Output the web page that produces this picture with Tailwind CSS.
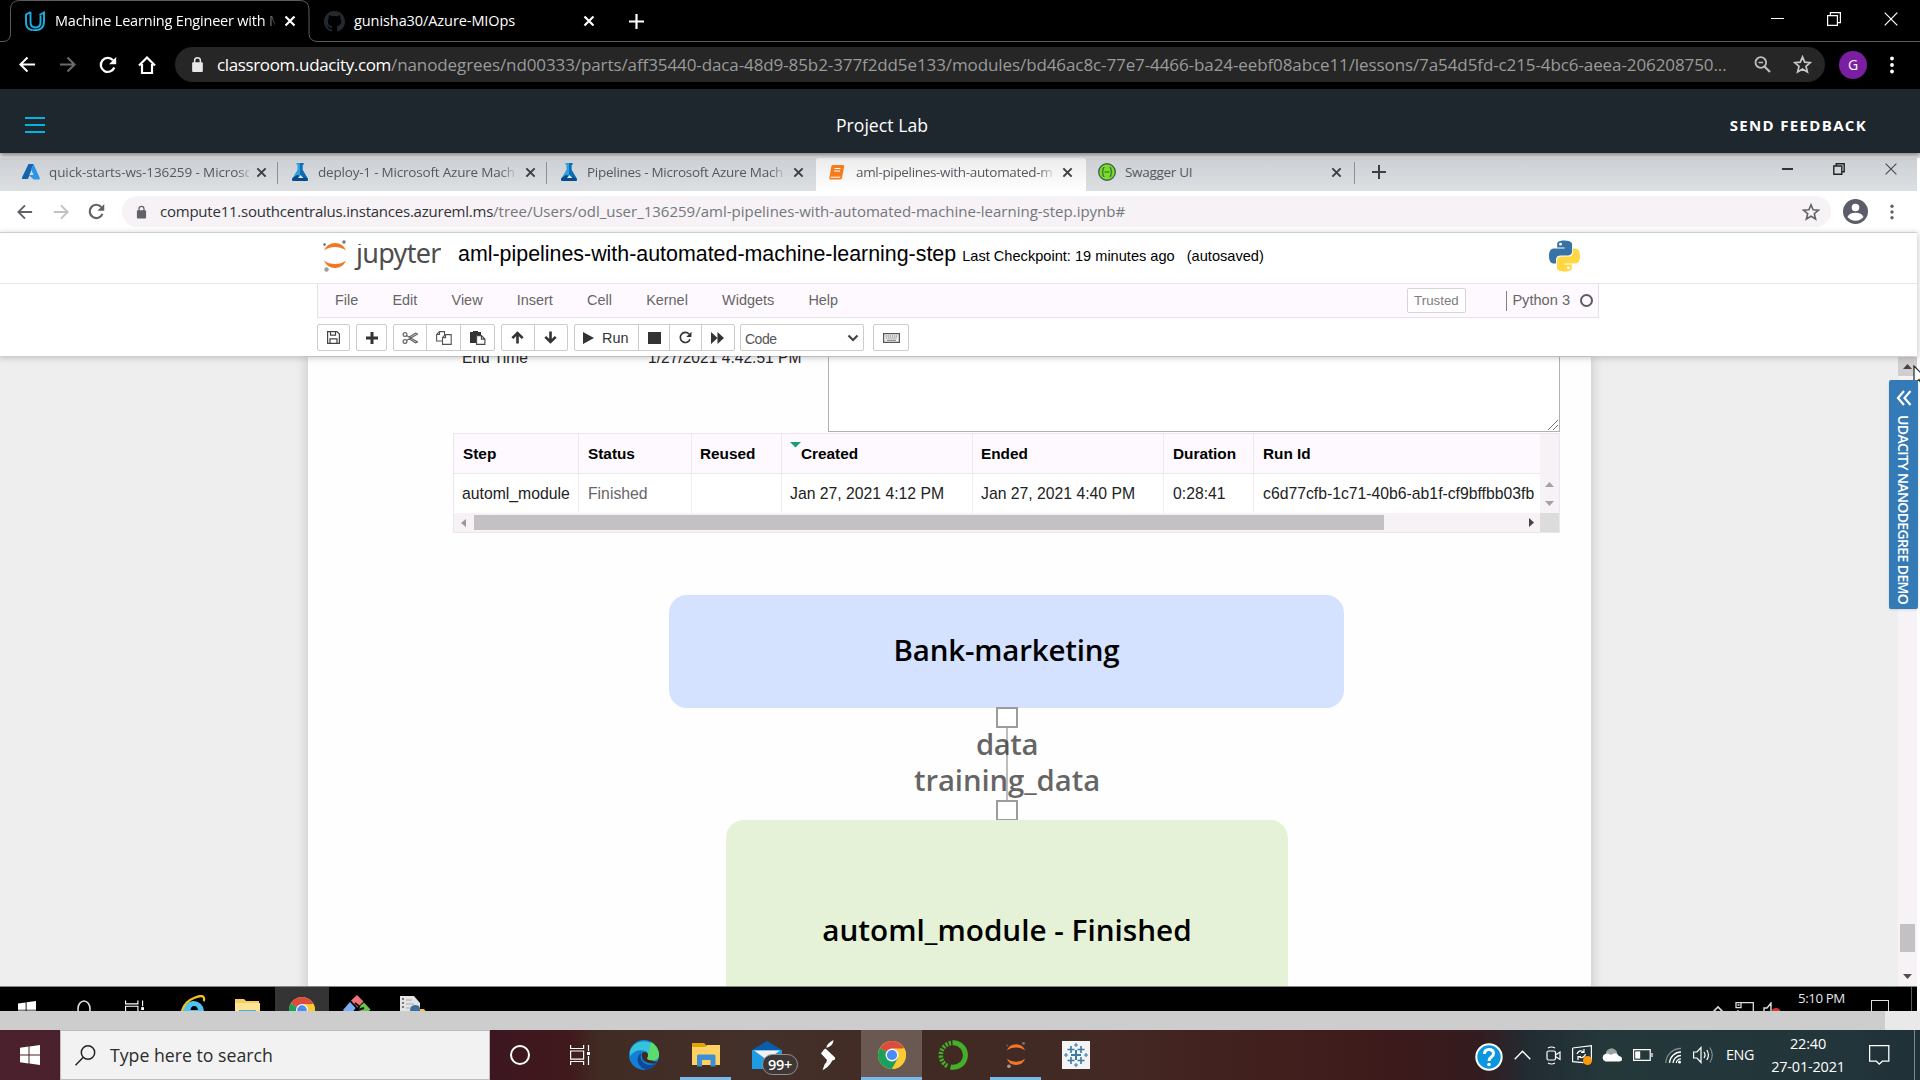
<!DOCTYPE html>
<html lang="en">
<head>
<meta charset="utf-8">
<title>Machine Learning Engineer with Microsoft Azure</title>
<script src="https://cdn.jsdelivr.net/npm/@tailwindcss/browser@4"></script>
</head>
<body class="w-[1920px] h-[1080px] overflow-hidden bg-white font-['Open_Sans',sans-serif]">
<svg class="hidden">
  <symbol id="x" viewBox="0 0 12 12"><path d="M1.5 1.5l9 9M10.500 1.500l-9 9" stroke="currentColor" stroke-width="2.200" fill="none"/></symbol>
  <symbol id="back" viewBox="0 0 18 18"><path d="M17 9H2M9 1.500L1.500 9 9 16.500" stroke="currentColor" stroke-width="2.200" fill="none"/></symbol>
  <symbol id="fwd" viewBox="0 0 18 18"><path d="M1 9h15M9 1.500L16.500 9 9 16.500" stroke="currentColor" stroke-width="2.200" fill="none"/></symbol>
  <symbol id="reload" viewBox="0 0 18 18"><path d="M15.300 11.500A7 7 0 1 1 14 4.200" stroke="currentColor" stroke-width="2.300" fill="none"/><path d="M17.200 1v7.200H10z" fill="currentColor"/></symbol>
  <symbol id="lock" viewBox="0 0 12 14"><rect x="1" y="5" width="10" height="9" rx="1" fill="currentColor"/><path d="M3.300 6V3.500a2.700 2.700 0 0 1 5.400 0V6" stroke="currentColor" stroke-width="1.400" fill="none"/></symbol>
  <symbol id="star" viewBox="0 0 18 18"><path d="M9 1.800l2.100 5 5.300.4-4.100 3.500 1.300 5.300L9 13.200 4.400 16l1.300-5.300L1.600 7.200l5.300-.4z" stroke="currentColor" stroke-width="1.600" fill="none"/></symbol>
  <symbol id="dots" viewBox="0 0 4 18"><circle cx="2" cy="2.500" r="1.900" fill="currentColor"/><circle cx="2" cy="9" r="1.900" fill="currentColor"/><circle cx="2" cy="15.500" r="1.900" fill="currentColor"/></symbol>
  <symbol id="flask" viewBox="0 0 18 18"><path d="M5.500 0h7v1.800h-1v5L17 16q.6 2-1.500 2h-13Q.4 18 1 16l5.500-9.200v-5h-1z" fill="#2f9fdd"/><path d="M9 0h3.500v1.800h-1v5L17 16q.6 2-1.500 2H9z" fill="#0f6db5"/><path d="M1.500 15L6 12l5 1 5.500 2.500Q17 18 15.500 18h-13Q.4 18 1.500 15z" fill="#0b4a8a"/><path d="M7 15l2.500-3 3 3z" fill="#dceefa"/></symbol>
  <symbol id="chrome" viewBox="0 0 28 28"><circle cx="14" cy="14" r="14" fill="#fbc934"/><path d="M14 14L1.900 7A14 14 0 0 1 26.100 7z" fill="#dd4b3e"/><path d="M14 14L1.900 7A14 14 0 0 0 14 28l6-10.500z" fill="#1c9f5b"/><path d="M14 7.500h12.400A14 14 0 0 1 14 28l5.800-10.500z" fill="#fbc934"/><circle cx="14" cy="14" r="6.500" fill="#f5f5f5"/><circle cx="14" cy="14" r="5.100" fill="#4b8bf5"/></symbol>
  <symbol id="jup" viewBox="0 0 24 32"><path d="M1 10.500Q4 3 12 3t11 7.500Q18.500 7 12 7T1 10.500zM1 20.500Q4 28 12 28t11-7.500Q18.500 24 12 24T1 20.500z" fill="#f37626"/><circle cx="21" cy="2" r="1.700" fill="#767677"/><circle cx="1.500" cy="4.500" r="1.200" fill="#616262"/><circle cx="3.500" cy="29.500" r="2.200" fill="#9e9e9e"/></symbol>
  <symbol id="win" viewBox="0 0 20 20"><path d="M0 2.800l8.500-1.200v8H0zM9.500 1.400L20 0v9.600H9.500zM0 10.500h8.500v8L0 17.300zM9.500 10.500H20V20L9.500 18.600z" fill="#fff"/></symbol>
  <symbol id="view" viewBox="0 0 20 20"><path d="M.6 0v3.500h13V0M.6 20v-3.500h13V20M.6 6h13v8.200H.6zM18.500 0v6M18.500 11v9" stroke="#fff" stroke-width="1.200" fill="none"/><path d="M17 7h3v3h-3z" fill="#fff"/></symbol>
  <symbol id="restore" viewBox="0 0 14 14"><path d="M.6 3.600h9.800v9.800H.6zM3.400 3.600V.6h10v10h-3" stroke="currentColor" stroke-width="1.200" fill="none"/></symbol>
  <symbol id="close" viewBox="0 0 14 14"><path d="M.7.7l12.600 12.600M13.300.7L.7 13.300" stroke="currentColor" stroke-width="1.200" fill="none"/></symbol>
</svg>

<!-- Browser tabs -->
<div class="relative h-[42px] bg-black text-white flex items-center text-[14.500px]">
  <svg class="absolute left-0 top-0 w-[1920px] h-[42px]" fill="none" stroke="#5c5c5c"><path d="M0 41.500h3q7.500 0 7.500-8V9.500q0-9 9-9H300q9 0 9 9v24q0 8 9 8h1602"/></svg>
  <svg class="w-5 h-5 ml-[25px] shrink-0" viewBox="0 0 20 20" fill="none" stroke="#15b1e7" stroke-width="1.900"><path d="M5.500 1L1 3.500V12q0 6 6.500 7.200M5.500 1v10q0 5.500 5 5.500t5-5.500V4.500"/><path d="M7.500 19.200Q19 20 19 10.500V1.500L14.500 4"/></svg>
  <div class="w-[220px] ml-[10px] overflow-hidden whitespace-nowrap tracking-[-0.200px] mask-r-from-[208px] mask-r-to-[222px]">Machine Learning Engineer with M</div>
  <svg class="w-3 h-3 ml-[9px] shrink-0"><use href="#x"/></svg>
  <svg class="w-[21px] h-[21px] ml-[28px] shrink-0" viewBox="0 0 16 16"><path fill="#24292e" d="M8 0C3.580 0 0 3.580 0 8c0 3.540 2.290 6.530 5.470 7.590.4.070.55-.17.55-.38 0-.19-.01-.82-.01-1.490-2.010.37-2.530-.49-2.690-.94-.09-.23-.48-.94-.82-1.130-.28-.15-.68-.52-.01-.53.63-.01 1.080.58 1.230.82.72 1.210 1.870.87 2.330.66.070-.52.280-.87.510-1.070-1.780-.2-3.640-.89-3.640-3.950 0-.87.31-1.590.82-2.150-.08-.2-.36-1.020.08-2.120 0 0 .67-.21 2.200.82.64-.18 1.320-.27 2-.27s1.360.09 2 .27c1.530-1.040 2.200-.82 2.200-.82.44 1.100.16 1.920.08 2.120.51.56.82 1.270.82 2.150 0 3.070-1.870 3.750-3.650 3.950.29.25.54.73.54 1.480 0 1.070-.01 1.930-.01 2.200 0 .21.15.46.55.38A8.010 8.010 0 0 0 16 8c0-4.420-3.580-8-8-8z"/></svg>
  <div class="w-[219px] ml-[9px] tracking-[-0.080px]">gunisha30/Azure-MIOps</div>
  <svg class="w-3 h-3 ml-[10px] shrink-0"><use href="#x"/></svg>
  <svg class="w-[15px] h-[15px] ml-[34px] shrink-0" viewBox="0 0 15 15"><path d="M7.500 0v15M0 7.500h15" stroke="#fff" stroke-width="2.200"/></svg>
  <div class="ml-auto mr-[22px] mb-[5px] flex items-center">
    <div class="w-[13px] h-px bg-white"></div>
    <svg class="w-[14px] h-[14px] ml-[43px]"><use href="#restore"/></svg>
    <svg class="w-[14px] h-[14px] ml-[43px]"><use href="#close"/></svg>
  </div>
</div>

<!-- Address bar -->
<div class="h-[47px] bg-black text-white flex items-center pb-[2px]">
  <svg class="w-[17px] h-[17px] ml-[19px]"><use href="#back"/></svg>
  <svg class="w-[17px] h-[17px] ml-[23px] text-[#6b6b6b]"><use href="#fwd"/></svg>
  <svg class="w-[18px] h-[18px] ml-[23px]"><use href="#reload"/></svg>
  <svg class="w-[18px] h-[18px] ml-[21px]" viewBox="0 0 18 18"><path d="M1 9.500L9 1.500l8 8M4 8v9h10V8" stroke="#fff" stroke-width="2.200" fill="none"/></svg>
  <div class="w-[1650px] h-[35px] ml-[19px] rounded-full bg-[#262626] flex items-center pl-[16px] text-[17px] whitespace-nowrap">
    <svg class="w-[13px] h-[15px] text-[#e8e8e8] shrink-0"><use href="#lock"/></svg>
    <span class="ml-[13px] tracking-[-0.360px]">classroom.udacity.com</span><span class="text-[#9a9a9a] tracking-[-0.097px]">/nanodegrees/nd00333/parts/aff35440-daca-48d9-85b2-377f2dd5e133/modules/bd46ac8c-77e7-4466-ba24-eebf08abce11/lessons/7a54d5fd-c215-4bc6-aeea-206208750...</span>
    <svg class="w-[17px] h-[17px] ml-auto shrink-0" viewBox="0 0 17 17" fill="none" stroke="#bdbdbd"><circle cx="6.800" cy="6.500" r="5.300" stroke-width="1.800"/><path d="M10.500 10.500l5.500 5.500" stroke-width="2.200"/><path d="M4.500 6.500h4.600" stroke-width="1.500"/></svg>
    <svg class="w-[19px] h-[19px] ml-[22px] mr-[13px] text-[#c8c8c8] shrink-0"><use href="#star"/></svg>
  </div>
  <div class="w-[28px] h-[28px] ml-[14px] rounded-full bg-[#7a1fa2] grid place-items-center text-[14px] leading-none">G</div>
  <svg class="w-1 h-[18px] ml-[23px]"><use href="#dots"/></svg>
</div>

<!-- Course header -->
<div class="relative z-10 h-[64px] bg-[#1e262e] text-white flex items-center pt-[8px] shadow-[0_2px_5px_rgba(0,0,0,0.45)]">
  <div class="w-5 ml-[25px] flex flex-col gap-[5px] -mt-[1px]"><div class="h-[2px] bg-[#02b3e4]"></div><div class="h-[2px] bg-[#02b3e4]"></div><div class="h-[2px] bg-[#02b3e4]"></div></div>
  <div class="w-[200px] ml-[737px] text-center text-[17.600px] tracking-[0.050px]">Project Lab</div>
  <div class="ml-auto mr-[53px] text-[15px] font-bold tracking-[1.330px]">SEND FEEDBACK</div>
</div>
<div class="h-[5px] bg-[#e3e3e3]"></div>

<div class="relative w-[1917px]">
  <!-- Lab browser tabs -->
  <div class="h-[33px] bg-linear-to-b from-[#cdd1d5] to-[#dbdfe2] flex text-[13.500px] text-[#55595e] pl-[9px]">
    <div class="w-[269px] shrink-0 flex items-center pl-[13px] pb-[5px] relative">
      <svg class="w-[18px] h-[16px] shrink-0" viewBox="0 0 18 16"><path d="M6.500 0h5L6 15H1q-1.500 0-1-1.500z" fill="#1463ac"/><path d="M11.500 0L17.800 14q.2 1.600-1 1.600h-5L6.500 11h5L9 5z" fill="#2b96e3"/></svg>
      <div class="w-[200px] ml-[9px] overflow-hidden whitespace-nowrap tracking-[-0.100px] mask-r-from-[188px] mask-r-to-[204px]">quick-starts-ws-136259 - Microsc</div>
      <svg class="w-[11px] h-[11px] ml-[7px] text-[#3c4043] shrink-0"><use href="#x"/></svg>
      <div class="absolute right-0 top-[4px] w-px h-[22px] bg-[#8d9195]"></div>
    </div>
    <div class="w-[269px] shrink-0 flex items-center pl-[13px] pb-[5px] relative">
      <svg class="w-[18px] h-[18px] shrink-0"><use href="#flask"/></svg>
      <div class="w-[200px] ml-[9px] overflow-hidden whitespace-nowrap tracking-[-0.200px] mask-r-from-[182px]">deploy-1 - Microsoft Azure Mach</div>
      <svg class="w-[11px] h-[11px] ml-[7px] text-[#3c4043] shrink-0"><use href="#x"/></svg>
      <div class="absolute right-0 top-[4px] w-px h-[22px] bg-[#8d9195]"></div>
    </div>
    <div class="w-[269px] shrink-0 flex items-center pl-[13px] pb-[5px]">
      <svg class="w-[18px] h-[18px] shrink-0"><use href="#flask"/></svg>
      <div class="w-[200px] ml-[9px] overflow-hidden whitespace-nowrap tracking-[-0.280px] mask-r-from-[182px]">Pipelines - Microsoft Azure Mach</div>
      <svg class="w-[11px] h-[11px] ml-[6px] text-[#3c4043] shrink-0"><use href="#x"/></svg>
    </div>
    <div class="w-[270px] shrink-0 flex items-center pl-[13px] pb-[5px] bg-linear-to-b from-[#ececec] to-white rounded-t-[2px]">
      <svg class="w-[16px] h-[15px] shrink-0" viewBox="0 0 16 15"><path d="M4 0h10q1.500 0 1.200 1.500L13 13q-.3 1.500-2 1.500H1.500Q0 14.500.3 13L2.300 1.500Q2.500 0 4 0z" fill="#f57c1b"/><path d="M5.500 3.500h6M5 6h6" stroke="#fff" stroke-width="1.200"/><path d="M1.500 12.200h9.800" stroke="#fff" stroke-width="1"/></svg>
      <div class="w-[200px] ml-[11px] overflow-hidden whitespace-nowrap tracking-[-0.330px] mask-r-from-[182px]">aml-pipelines-with-automated-m</div>
      <svg class="w-[11px] h-[11px] ml-[6px] text-[#3c4043] shrink-0"><use href="#x"/></svg>
    </div>
    <div class="w-[269px] shrink-0 flex items-center pl-[12px] pb-[5px] relative">
      <svg class="w-[18px] h-[18px] shrink-0" viewBox="0 0 18 18"><circle cx="9" cy="9" r="8.300" fill="#7bdc2c" stroke="#41684b" stroke-width="1.400"/><path d="M6.500 4.500Q5 4.500 5 6v1.500Q5 9 3.700 9 5 9 5 10.500V12q0 1.500 1.500 1.500M11.500 4.500Q13 4.500 13 6v1.500Q13 9 14.300 9 13 9 13 10.500V12q0 1.500-1.500 1.500M6.500 9h5" stroke="#2b5a35" stroke-width="1.100" fill="none"/></svg>
      <div class="w-[198px] ml-[9px] tracking-[-0.300px]">Swagger UI</div>
      <svg class="w-[11px] h-[11px] ml-[8px] text-[#3c4043] shrink-0"><use href="#x"/></svg>
      <div class="absolute right-0 top-[4px] w-px h-[22px] bg-[#8d9195]"></div>
    </div>
    <svg class="w-[14px] h-[14px] ml-[17px] mt-[7px]" viewBox="0 0 14 14"><path d="M7 0v14M0 7h14" stroke="#3c4043" stroke-width="2"/></svg>
    <div class="ml-auto mr-[20px] pb-[11px] flex items-center text-[#222]">
      <div class="w-[11px] h-[1.500px] bg-[#333]"></div>
      <svg class="w-[12px] h-[12px] ml-[40px]" viewBox="0 0 12 12"><path d="M.8 3h8v8.200h-8zM3.200 3V.8h8v8H8.800" stroke="#222" stroke-width="1.400" fill="none"/></svg>
      <svg class="w-[12px] h-[12px] ml-[40px] text-[#444]"><use href="#close"/></svg>
    </div>
  </div>

  <!-- Lab address bar -->
  <div class="h-[42px] bg-white border-b border-[#dfdfe6] flex items-center text-[#5f6368]">
    <svg class="w-[16px] h-[16px] ml-[17px]"><use href="#back"/></svg>
    <svg class="w-[16px] h-[16px] ml-[20px] text-[#bfc1c4]"><use href="#fwd"/></svg>
    <svg class="w-[17px] h-[17px] ml-[19px]"><use href="#reload"/></svg>
    <div class="w-[1709px] h-[31px] ml-[17px] rounded-full bg-[#f6f2f6] flex items-center pl-[14px] text-[15px] whitespace-nowrap">
      <svg class="w-[11px] h-[14px] shrink-0"><use href="#lock"/></svg>
      <span class="ml-[13px] text-[#303236] tracking-[-0.230px]">compute11.southcentralus.instances.azureml.ms</span><span class="text-[#74777b]">/tree/Users/odl_user_136259/aml-pipelines-with-automated-machine-learning-step.ipynb#</span>
      <svg class="w-[18px] h-[18px] ml-auto mr-[11px] shrink-0"><use href="#star"/></svg>
    </div>
    <svg class="w-[25px] h-[25px] ml-[12px]" viewBox="0 0 25 25"><circle cx="12.500" cy="12.500" r="12.500" fill="#5a5e68"/><circle cx="12.500" cy="8.500" r="3.800" fill="#fff"/><path d="M4.500 18q2-4.200 8-4.200t8 4.200q-3 3.700-8 3.700T4.500 18z" fill="#fff"/></svg>
    <svg class="w-[4px] h-[16px] ml-[22px]"><use href="#dots"/></svg>
  </div>

  <!-- Notebook header -->
  <div class="relative z-10 bg-white h-[123px] shadow-[0_1px_6px_1px_rgba(80,70,80,0.28)]">
    <div class="h-[50px] flex items-center pl-[323px]">
      <svg class="w-[24px] h-[32px] -mt-[5px]"><use href="#jup"/></svg>
      <div class="ml-[7px] h-[30px] mt-[1px] overflow-hidden flex items-start"><div class="-mt-[9px] text-[27px] leading-[36px] tracking-[-0.700px] text-[#4e4e4e] font-['Noto_Sans',sans-serif] w-[87px] pl-[2px]">jupyter</div></div>
      <div class="ml-[17px] -mt-[8px] flex items-baseline font-['Liberation_Sans',sans-serif] text-black whitespace-nowrap">
        <span class="text-[21.400px]">aml-pipelines-with-automated-machine-learning-step</span>
        <span class="ml-[6px] text-[14.600px]">Last Checkpoint: 19 minutes ago</span>
        <span class="ml-[12px] text-[14.600px]">(autosaved)</span>
      </div>
      <svg class="w-[31px] h-[32px] ml-auto mr-[337px] -mt-[5px]" viewBox="0 0 110 110"><path fill="#3873a5" d="M54.900 0C27 0 29 12 29 12v12.500h26.500v3.700H18S0 26 0 54.500 15.500 82 15.500 82H25V69s-.5-15.500 15.500-15.500H67s15-.2 15-14.500V15S84.500 0 54.900 0z"/><circle cx="41" cy="13" r="5" fill="#fff"/><path fill="#ffd743" d="M55.100 110c28 0 26-12 26-12V85.500H54.500v-3.700H92s18 2.200 18-26.300S94.500 28 94.500 28H85v13s.5 15.500-15.500 15.500H43s-15 .2-15 14.500v24s-2.500 15 27.100 15z"/><circle cx="69" cy="97" r="5" fill="#fff"/></svg>
    </div>
    <div class="border-t border-[#e8e8e8] px-[317px]">
      <div class="w-[1282px] h-[34px] bg-[#fdf9fe] border border-t-0 border-[#e4e2e5] flex items-center pl-[17px] gap-[34.200px] font-['Liberation_Sans',sans-serif] text-[14.450px] text-[#666]">
        <span>File</span><span>Edit</span><span>View</span><span>Insert</span><span>Cell</span><span>Kernel</span><span>Widgets</span><span>Help</span>
        <div class="ml-auto flex items-center">
          <div class="w-[59px] h-[25px] border border-[#d6d4d7] bg-white rounded-[2px] grid place-items-center text-[13.300px] text-[#7d7d7d]">Trusted</div>
          <div class="w-[1.500px] h-[20px] ml-[40px] bg-[#808080]"></div>
          <span class="ml-[5px] text-[14.600px]">Python 3</span>
          <div class="w-[13px] h-[13px] rounded-full border-2 border-[#5c5c5c] ml-[10px] mr-[5px]"></div>
        </div>
      </div>
    </div>
    <div class="flex pt-[6px] pl-[317px] h-[34px] font-['Liberation_Sans',sans-serif] text-[14.400px] text-[#333]">
      <div class="w-[33px] h-[27px] border border-[#ccc] rounded-[2px] grid place-items-center"><svg class="w-[13px] h-[13px]" viewBox="0 0 13 13" fill="none" stroke="#444" stroke-width="1.200"><path d="M.6.6h9.400L12.400 3v9.400H.6zM3.500.6v3.600h5V.6M3 12.400V7.800h7v4.600"/></svg></div>
      <div class="w-[31px] h-[27px] ml-[6px] border border-[#ccc] rounded-[2px] grid place-items-center"><svg class="w-[12px] h-[12px]" viewBox="0 0 12 12"><path d="M6 0v12M0 6h12" stroke="#333" stroke-width="3"/></svg></div>
      <div class="w-[102px] h-[27px] ml-[6px] border border-[#ccc] rounded-[2px] grid grid-cols-3 divide-x divide-[#ccc]">
        <div class="grid place-items-center"><svg class="w-[16px] h-[12px]" viewBox="0 0 16 12" fill="none" stroke="#666" stroke-width="1.200"><circle cx="3" cy="2.500" r="1.900"/><circle cx="3" cy="9.500" r="1.900"/><path d="M4.500 3.600L15.500 10l-2 .8L7 6.800M4.500 8.400L15.500 2l-2-.8L7 5.200"/></svg></div>
        <div class="grid place-items-center"><svg class="w-[16px] h-[14px] ml-[2px]" viewBox="0 0 16 14" fill="#fff" stroke="#555" stroke-width="1.100"><path d="M3.500.6h5v9.400H.6V3.500zM3.500.6v2.900H.6"/><path d="M9.500 3.600h5.700v9.800H6.500V6.600zM9.500 3.600v3H6.500"/></svg></div>
        <div class="grid place-items-center"><svg class="w-[16px] h-[14px] ml-[2px]" viewBox="0 0 16 14"><path d="M0 1h3V0h5v1h3v3H6v8H0z" fill="#333"/><path d="M6.600 4.600h4.800l3.500 3.500v5.300H6.600zM11.400 4.600v3.500h3.500" fill="#fff" stroke="#444" stroke-width="1.100"/></svg></div>
      </div>
      <div class="w-[67px] h-[27px] ml-[6px] border border-[#ccc] rounded-[2px] grid grid-cols-2 divide-x divide-[#ccc]">
        <div class="grid place-items-center"><svg class="w-[13px] h-[13px]" viewBox="0 0 13 13" fill="none" stroke="#333" stroke-width="2.600"><path d="M6.500 12.500V2M1.300 7.200l5.200-5.200 5.200 5.200"/></svg></div>
        <div class="grid place-items-center"><svg class="w-[13px] h-[13px]" viewBox="0 0 13 13" fill="none" stroke="#333" stroke-width="2.600"><path d="M6.500.5V11M1.300 5.800l5.200 5.200 5.200-5.200"/></svg></div>
      </div>
      <div class="w-[161px] h-[27px] ml-[6px] border border-[#ccc] rounded-[2px] flex divide-x divide-[#ccc]">
        <div class="w-[64px] flex items-center pl-[8px]"><svg class="w-[11px] h-[12px]" viewBox="0 0 11 12"><path d="M0 0l11 6-11 6z" fill="#333"/></svg><span class="ml-[8px] leading-[20px]">Run</span></div>
        <div class="w-[31px] grid place-items-center"><div class="w-[13px] h-[12px] bg-[#333]"></div></div>
        <div class="w-[32px] grid place-items-center"><svg class="w-[13px] h-[13px] text-[#333]"><use href="#reload"/></svg></div>
        <div class="flex-1 grid place-items-center"><svg class="w-[13px] h-[12px] mr-[2px]" viewBox="0 0 13 12"><path d="M0 0l6.500 6L0 12zM6.500 0L13 6l-6.500 6z" fill="#333"/></svg></div>
      </div>
      <div class="w-[124px] h-[27px] ml-[5px] border border-[#ccc] rounded-[2px] flex items-center justify-between pl-[4px] pr-[4px] text-[14px] tracking-[-0.500px] text-[#555]"><span class="pt-[3px]">Code</span><svg class="w-[12px] h-[8px]" viewBox="0 0 12 8"><path d="M1.500 1.500L6 6l4.500-4.500" stroke="#444" stroke-width="2.200" fill="none"/></svg></div>
      <div class="w-[36px] h-[27px] ml-[9px] border border-[#ccc] rounded-[2px] grid place-items-center"><svg class="w-[17px] h-[10px]" viewBox="0 0 17 10"><rect x=".6" y=".6" width="15.800" height="8.800" fill="#eee" stroke="#555" stroke-width="1.200"/><path d="M2.500 3h12M3 5h11" stroke="#777" stroke-width="1.100" stroke-dasharray="1.300 .8"/><path d="M4 7.300h9" stroke="#777"/></svg></div>
    </div>
  </div>

  <!-- Notebook body -->
  <div class="h-[631px] relative bg-[#eee] overflow-hidden border-b border-[#858585] pl-[308px] pt-px flex">
    <div class="w-[1283px] h-[640px] bg-[#fefefe] shadow-[0_0_10px_2px_rgba(87,60,87,0.200)] pl-[145px] font-['Liberation_Sans',sans-serif] text-[#222]">
      <div class="flex h-[75px]">
        <div class="w-[195px] pl-[9px] -mt-[8px] text-[15.600px] leading-[18px]">End Time</div>
        <div class="w-[180px] -mt-[8px] text-[15.600px] leading-[18px]">1/27/2021 4:42:51 PM</div>
        <div class="w-[732px] relative bg-white border border-t-0 border-[#b2b0b3]">
          <svg class="absolute right-[1px] bottom-[1px] w-[10px] h-[10px]" viewBox="0 0 10 10" stroke="#777"><path d="M0 10L10 0M5 10l5-5"/></svg>
        </div>
      </div>
      <div class="w-[1107px] mt-px border border-[#ebe7ec] grid grid-cols-[1086px_19px]">
        <div>
          <div class="h-[40px] grid grid-cols-[125px_113px_90px_191px_191px_90px_286px] bg-[#fdf9fe] border-b border-[#ece8ed] divide-x divide-[#ece8ed] text-[15.350px] font-bold text-black leading-[39px]">
            <div class="pl-[9px]">Step</div><div class="pl-[9px]">Status</div><div class="pl-[8px]">Reused</div>
            <div class="pl-[8px] flex"><svg class="w-[11px] h-[6px] mt-[8px]" viewBox="0 0 11 6"><path d="M0 0h11L5.500 5.500z" fill="#13a072"/></svg>Created</div>
            <div class="pl-[8px]">Ended</div><div class="pl-[9px]">Duration</div><div class="pl-[9px]">Run Id</div>
          </div>
          <div class="h-[39px] grid grid-cols-[125px_113px_90px_191px_191px_90px_286px] bg-white divide-x divide-[#f0ecf1] text-[15.750px] leading-[39px] whitespace-nowrap">
            <div class="pl-[8px]">automl_module</div><div class="pl-[9px] text-[#666]">Finished</div><div></div>
            <div class="pl-[8px]">Jan 27, 2021 4:12 PM</div><div class="pl-[8px]">Jan 27, 2021 4:40 PM</div><div class="pl-[9px]">0:28:41</div><div class="pl-[9px]">c6d77cfb-1c71-40b6-ab1f-cf9bffbb03fb</div>
          </div>
        </div>
        <div class="bg-[#f6f2f6] pt-[48px] flex flex-col items-center gap-[14px]">
          <svg class="w-[9px] h-[5px]" viewBox="0 0 9 5"><path d="M4.500 0L9 5H0z" fill="#a5a2a5"/></svg>
          <svg class="w-[9px] h-[5px]" viewBox="0 0 9 5"><path d="M4.500 5L9 0H0z" fill="#a5a2a5"/></svg>
        </div>
        <div class="h-[19px] bg-[#f6f2f6] flex items-center pl-[7px] pr-[6px]">
          <svg class="w-[5px] h-[8px]" viewBox="0 0 5 8"><path d="M0 4l5-4v8z" fill="#9a979a"/></svg>
          <div class="w-[910px] h-[15px] ml-[8px] bg-[#c4c1c4]"></div>
          <svg class="w-[5px] h-[9px] ml-auto" viewBox="0 0 5 9"><path d="M5 4.500L0 0v9z" fill="#444"/></svg>
        </div>
        <div class="bg-[#dcdcdc]"></div>
      </div>
    </div>

    <!-- Pipeline graph -->
    <div class="absolute left-[1006px] top-[372px] w-[1.500px] h-[72px] bg-[#bdbdbd]"></div>
    <div class="absolute left-[669px] top-[239px] w-[675px] h-[113px] rounded-[18px] bg-[#d5e2ff] text-black text-[29.500px] font-semibold tracking-[-0.200px] leading-[109px] text-center">Bank-marketing</div>
    <div class="absolute left-[996px] top-[351px] w-[22px] h-[21px] bg-white border-2 border-[#9c9c9c]"></div>
    <div class="absolute left-[807px] top-[370px] w-[400px] text-center text-[29.300px] font-semibold tracking-[-0.080px] leading-[36px] text-[#333]/75"><div class="tracking-[-0.500px]">data</div><div>training_data</div></div>
    <div class="absolute left-[996px] top-[444px] w-[22px] h-[21px] bg-white border-2 border-[#9c9c9c]"></div>
    <div class="absolute left-[726px] top-[464px] w-[562px] h-[230px] rounded-t-[18px] bg-[#e5f2d7] text-black text-[29.700px] font-semibold leading-[220px] text-center">automl_module - Finished</div>

    <!-- Page scrollbar -->
    <div class="absolute right-0 top-px w-[19px] h-full bg-[#f6f2f6]">
      <div class="h-[19px] bg-[#d0ced0] grid place-items-center"><svg class="w-[9px] h-[5px]" viewBox="0 0 9 5"><path d="M4.500 0L9 5H0z" fill="#444"/></svg></div>
      <div class="w-[15px] h-[28px] ml-[2px] mt-[548px] bg-[#c4c1c4]"></div>
      <svg class="w-[9px] h-[5px] ml-[5px] mt-[22px]" viewBox="0 0 9 5"><path d="M4.500 5L9 0H0z" fill="#505050"/></svg>
    </div>
  </div>
</div>

<!-- Lab taskbar, cut off by the frame -->
<div class="w-[1917px] h-[24px] bg-black overflow-hidden flex items-start">
  <svg class="w-[18px] h-[20px] ml-[18px] mt-[13px]"><use href="#win"/></svg>
  <svg class="w-[14px] h-[18px] ml-[41px] mt-[13px]" viewBox="0 0 14 18"><ellipse cx="7" cy="9" rx="6" ry="8" stroke="#ddd" stroke-width="1.600" fill="none"/></svg>
  <svg class="w-[19px] h-[20px] ml-[34px] mt-[13px]"><use href="#view"/></svg>
  <svg class="w-[26px] h-[28px] ml-[36px] mt-[8px]" viewBox="0 0 26 28"><path d="M3 17a10.500 10.500 0 0 1 21-1v4H10.500q1 4 5 4 3.500 0 4.500-2h4q-3 6-9 6-12 0-12-11zM10.500 15H18q-.5-4-3.800-4-3.200 0-3.700 4z" fill="#4fc4f2"/><path d="M1 20Q3 7 14 3q9-4 10 0 .5 1.500-.5 3" stroke="#f3c21d" stroke-width="2.300" fill="none"/></svg>
  <svg class="w-[25px] h-[24px] ml-[29px] mt-[12px]" viewBox="0 0 25 24"><path d="M0 0h9l2 2h13v22H0z" fill="#f5cd63"/><path d="M0 4h25v20H0z" fill="#fde393"/><path d="M4 11h17v13H4z" fill="#46b0dd"/></svg>
  <div class="w-[54px] h-full ml-[15px] bg-[#343434] flex justify-center"><svg class="w-[26px] h-[28px] mt-[9px] shrink-0"><use href="#chrome"/></svg></div>
  <svg class="w-[28px] h-[28px] ml-[14px] mt-[8px]" viewBox="0 0 28 28"><path d="M14 0l6.500 6.500-6 6L8 5.500z" fill="#ee7279"/><path d="M7 7l5.500 6L8 20H4l-4-5z" fill="#7fadf5"/><path d="M21 7.500l6.500 7L22 20h-7l2-9z" fill="#6cc24a"/><path d="M12 8l5 4M15 15l6-2" stroke="#111" stroke-width="2"/></svg>
  <svg class="w-[27px] h-[28px] ml-[29px] mt-[9px]" viewBox="0 0 27 28"><path d="M0 0h14l6 7v21H0z" fill="#e4e4e4"/><path d="M2 3h2M2 7h2M2 11h2" stroke="#555" stroke-width="1.500"/><path d="M6 4h6M6 8h8M6 12h5" stroke="#aaa"/><path d="M10 15q0-6 5-6t5 4v6H10z" fill="#3d6f9e"/><path d="M20 13h4l3 4h-7z" fill="#f4c430"/></svg>
  <svg class="w-[14px] h-[9px] ml-auto mt-[18px]" viewBox="0 0 14 9"><path d="M1 8l6-6 6 6" stroke="#ddd" stroke-width="1.600" fill="none"/></svg>
  <svg class="w-[19px] h-[20px] ml-[10px] mt-[15px]" viewBox="0 0 19 20" fill="none" stroke="#ddd" stroke-width="1.300"><path d="M6 .7h12.300V14H3V8M1 .7h5v5H1zM2.500 3h2"/></svg>
  <svg class="w-[18px] h-[20px] ml-[9px] mt-[15px]" viewBox="0 0 18 20"><path d="M1 6h3l4-5v16l-4-4H1z" fill="none" stroke="#ddd" stroke-width="1.400"/><circle cx="13" cy="11" r="5" fill="#e02f2f"/></svg>
  <div class="ml-[17px] mt-[2px] text-[13.300px] leading-[18px] tracking-[-0.400px] text-[#e6e6e6] w-[48px] whitespace-nowrap">5:10 PM</div>
  <div class="w-[18px] h-[20px] ml-[25px] mt-[13px] border-[1.500px] border-[#ddd]"></div>
  <div class="w-px h-full ml-[22px] mr-[5px] bg-[#5a5a5a]"></div>
</div>

<!-- Horizontal page scrollbar -->
<div class="h-[19px] bg-[#e9e9e9]"><div class="w-[1885px] h-full bg-[#cdcdcd]"></div></div>

<!-- Desktop taskbar -->
<div class="h-[50px] text-white flex items-center bg-[linear-gradient(90deg,#4b212d_0,#4b212d_60px,#3d1720_490px,#40191c_570px,#412c24_600px,#44302a_760px,#402a24_900px,#432a24_1080px,#43231f_1190px,#3c1a1b_1400px,#331c1f_1480px,#222c33_1530px,#24383a_1610px,#22353a_1850px,#1f3036_1920px)]">
  <svg class="w-5 h-5 ml-[20px]"><use href="#win"/></svg>
  <div class="w-[430px] h-[50px] ml-[20px] bg-[#f2f2f2] border border-[#bdbdbd] flex items-center pl-[14px] text-[#2b2b2b] text-[17.700px]">
    <svg class="w-[21px] h-[21px]" viewBox="0 0 21 21" fill="none" stroke="#222" stroke-width="1.500"><circle cx="13" cy="7.500" r="6.700"/><path d="M8.300 12.300L.5 20.300"/></svg>
    <span class="ml-[14px]">Type here to search</span>
  </div>
  <div class="w-[20px] h-[20px] ml-[20px] rounded-full border-[2.500px] border-white"></div>
  <svg class="w-5 h-5 ml-[40px]"><use href="#view"/></svg>
  <svg class="w-[30px] h-[30px] ml-[39px]" viewBox="0 0 30 30"><circle cx="15" cy="15" r="15" fill="#1380d5"/><path d="M1 11A15 15 0 0 1 30 15q0 5.500-7 5.500-5 0-5-2.500 1-1 1-3 0-4-5-4.500Q6 9.500 1 16z" fill="#35c3da"/><path d="M22 2a15 15 0 0 1 8 13q0 5.500-7 5.500-5 0-5-2.500 1-1 1-3z" fill="#5cdc6c"/><path d="M12 13q-2 9 6 11.500 4.500 1.300 9.500-1.200A15 15 0 0 1 17 29.900Q9 27 8.500 20 8.500 15 12 13z" fill="#0c4a97"/><path d="M13 13q-1.500 7 5 9.500 5 1.700 9.500.7l.9-1.500Q26 22 23 20.500q-5-.3-5-2.500 1-1 1-3 0-2-2-3-2-.5-4 1z" fill="#40291f"/></svg>
  <div class="relative w-[51px] h-[50px] ml-[21px] grid place-items-center">
    <svg class="w-[28px] h-[24px] -mt-[1px]" viewBox="0 0 28 24"><path d="M0 0h12l2 2v4H0z" fill="#e0a30a"/><path d="M0 4h13l2-2h13v20H0z" fill="#fdd263"/><path d="M5 23.500V13q0-1.500 1.500-1.500h15.500q1.500 0 1.500 1.500v10.500h-5V17h-8.500v6.500z" fill="#3d8ed4"/></svg>
    <div class="absolute left-0 bottom-0 w-full h-[3px] bg-[#76b9ed]"></div>
  </div>
  <div class="relative w-[46px] h-[50px] ml-[21px]">
    <svg class="absolute left-0 top-[11px] w-[30px] h-[28px]" viewBox="0 0 30 28"><path d="M0 9L15 0l15 9z" fill="#0b5cab"/><path d="M0 9h30v19H0z" fill="#1d9ce4"/><path d="M2 9.500h26L15 19z" fill="#f1f1f1"/></svg>
    <div class="absolute left-[10px] top-[24px] w-[36px] h-[21px] rounded-full border border-[#99908c] bg-[#3d3735] text-[14.500px] leading-[19px] tracking-[-0.300px] font-semibold text-center">99+</div>
  </div>
  <svg class="w-[15px] h-[30px] ml-[23px]" viewBox="0 0 15 30"><path d="M12.500 0Q5 4 5.500 8l3-1.500Q12 5 12.500 0zM3 9.500L0 13.500l6 6.500-1 3 9-3.500v-2L4.500 8.500zM11.500 20.500L4 23.500 1.500 30Q7 28 11.500 20.500z" fill="#fff"/></svg>
  <div class="relative w-[61px] h-[50px] ml-[25px] bg-[#6a5952] grid place-items-center">
    <svg class="w-[28px] h-[28px]"><use href="#chrome"/></svg>
    <div class="absolute left-0 bottom-0 w-full h-[3px] bg-[#76b9ed]"></div>
  </div>
  <svg class="w-[30px] h-[30px] ml-[16px]" viewBox="0 0 30 30" fill="none" stroke="#43b02a"><path d="M14.500 2.700a12.300 12.300 0 1 1-2 24.300" stroke-width="5"/><path d="M13 3A12.300 12.300 0 0 0 10 26.300" stroke-width="4.500" stroke-dasharray="2.200 1.300"/></svg>
  <div class="relative w-[51px] h-[50px] ml-[22px] grid place-items-center">
    <svg class="w-[20px] h-[28px]"><use href="#jup"/></svg>
    <div class="absolute left-0 bottom-0 w-full h-[3px] bg-[#76b9ed]"></div>
  </div>
  <svg class="w-[28px] h-[28px] ml-[21px]" viewBox="0 0 28 28" fill="none" stroke="#3a7ca8"><path d="M0 0h28v28H0z" fill="#f4f4f4" stroke="none"/><path d="M14 9v10M9 14h10" stroke-width="2"/><path d="M9 5v7M5.500 8.500h7M19 5v7M15.500 8.500h7M9 16v7M5.500 19.500h7M19 16v7M15.500 19.500h7" stroke-width="1.600"/><path d="M14 2v4M12 4h4M14 22v4M12 24h4M4 12v4M2 14h4M24 12v4M22 14h4" stroke-width="1.100"/></svg>

  <svg class="w-[28px] h-[28px] ml-auto mt-[3px]" viewBox="0 0 28 28"><circle cx="14" cy="14" r="12.700" fill="#0b96dd" stroke="#fff" stroke-width="2"/><path d="M9.500 11q0-4.500 4.500-4.500t4.500 4q0 2-2.200 3.500Q14 15.500 14 18" stroke="#fff" stroke-width="3" fill="none"/><circle cx="14" cy="21.500" r="1.800" fill="#fff"/></svg>
  <svg class="w-[17px] h-[10px] ml-[11px]" viewBox="0 0 17 10"><path d="M.7 9.200l7.800-8 7.800 8" stroke="#fff" stroke-width="1.400" fill="none"/></svg>
  <svg class="w-[15px] h-[19px] ml-[15px]" viewBox="0 0 15 19" fill="none" stroke="#fff" stroke-width="1.200"><rect x="1" y="5" width="8.500" height="9" rx="1.500"/><path d="M9.500 9l4.500-3v7.500l-4.500-3M2 2q3.500-2 7 0M2 17q3.500 2 7 0"/></svg>
  <svg class="w-[21px] h-[20px] ml-[11px]" viewBox="0 0 21 20"><path d="M.6 3L19.400.7v15.500M.6 3v13.600l11 1" fill="none" stroke="#fff" stroke-width="1.200"/><path d="M5 9q1.500-4 5-3l2 1.500M12 4v3.500H9M13.500 9q-1.500 4-5 3.500L6 11.500M6 15v-3.500h3" fill="none" stroke="#fff" stroke-width="1.200"/><circle cx="15.500" cy="15.500" r="4.500" fill="#fb9a0b"/></svg>
  <svg class="w-[20px] h-[14px] ml-[9px]" viewBox="0 0 20 14"><path d="M5 9A5 5 0 0 1 5.500 2q5-4 9 1l1 3z" fill="#9aa3a4"/><path d="M3.500 13.500A4 4 0 0 1 3 6q3.500-1.500 6 1 5-4 8 1 3 .5 3 3 0 2.500-3 2.500z" fill="#fff"/></svg>
  <svg class="w-[20px] h-[12px] ml-[11px]" viewBox="0 0 20 12"><path d="M.6.6h16.600v10.800H.6zM19 4v4" fill="none" stroke="#fff" stroke-width="1.200"/><path d="M2.200 2.400h5v7.200h-5z" fill="#fff"/></svg>
  <svg class="w-[17px] h-[17px] ml-[12px]" viewBox="0 0 17 17" fill="none" stroke-width="1.300"><path d="M.8 16A15 15 0 0 1 16 1.500" stroke="#7f8c8e"/><path d="M4.500 16A11.500 11.500 0 0 1 16 5M8 16a8 8 0 0 1 8-7.500M11.300 16a4.500 4.500 0 0 1 4.700-4.200" stroke="#fff"/><circle cx="14.500" cy="15" r="1.500" fill="#fff"/></svg>
  <svg class="w-[21px] h-[18px] ml-[11px]" viewBox="0 0 21 18" fill="none" stroke="#fff" stroke-width="1.200"><path d="M.6 6H4l4-4.500v15L4 12H.6zM11 6q2 3 0 6M13.800 4q3.200 5 0 10"/><path d="M16.800 1.500q5 7.500 0 15" stroke="#7f8c8e"/></svg>
  <span class="ml-[12px] text-[14.300px] tracking-[-0.350px] w-[30px]">ENG</span>
  <div class="w-[80px] ml-[12px] text-center text-[14.500px] tracking-[-0.200px] leading-[23px]"><div>22:40</div><div>27-01-2021</div></div>
  <svg class="w-[21px] h-[21px] ml-[21px]" viewBox="0 0 21 21"><path d="M.6.6h19.200v15.600h-6.500l-3 3-3-3H.6z" fill="none" stroke="#fff" stroke-width="1.300"/></svg>
  <div class="w-px h-full ml-[24px] mr-[5px] bg-[#7d898b]"></div>
</div>

<!-- Demo drawer handle -->
<div class="absolute z-20 left-[1889px] top-[380px] w-[29px] h-[229px] rounded-[2px] bg-[#337ab7] shadow-sm text-white flex flex-col items-center pt-[10px]">
  <svg class="w-[16px] h-[16px] shrink-0" viewBox="0 0 16 16"><path d="M8 1L2 8l6 7M14.500 1l-6 7 6 7" stroke="#fff" stroke-width="2.200" fill="none"/></svg>
  <div class="mt-[9px] mr-[2px] [writing-mode:vertical-rl] text-[14px] leading-[24px] tracking-[-0.620px] font-semibold whitespace-nowrap">UDACITY NANODEGREE DEMO</div>
</div>
<svg class="absolute z-10 left-[1913px] top-[365px] w-[7px] h-[20px]" viewBox="0 0 7 20"><path d="M1 1v18l5-4.500 3 6V9z" fill="#fff" stroke="#222" stroke-width="1.200"/></svg>
</body>
</html>
